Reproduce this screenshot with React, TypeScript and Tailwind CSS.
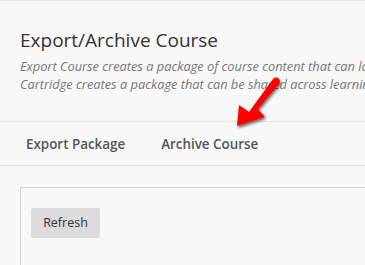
import React from "react";

export default function App() {
  return (
    <div className="relative h-[265px] w-[365px] overflow-hidden bg-[#f8f8f8] font-['Open_Sans',sans-serif]">
      {/* Header */}
      <div className="border-t border-[#e6e6e6] px-5 pt-[27px] pb-[28px]">
        <h1 className="whitespace-nowrap text-[19px] leading-[24px] text-[#333]">Export/Archive Course</h1>
        <p className="mt-[5px] whitespace-nowrap text-[12.8px] italic leading-[18px] text-[#777]">
          Export Course creates a package of course content that can later be imported.
          <br />
          Cartridge creates a package that can be shared across learning systems.
        </p>
      </div>

      {/* Tabs */}
      <div className="flex h-[45px] items-center gap-[36px] border-y border-[#e6e6e6] pl-[26px] pt-[2px]">
        <span className="text-[13.4px] font-semibold text-[#555]">Export Package</span>
        <span className="text-[13.4px] font-semibold text-[#555]">Archive Course</span>
      </div>

      {/* Content box */}
      <div className="ml-5 mt-[21px] h-[100px] border-t border-l border-[#cfcfcf] px-[10px] pt-5">
        <button className="h-[30px] w-[69px] rounded-[2px] bg-[#dcdcdc] text-[12.5px] text-[#333]">Refresh</button>
      </div>

      {/* Annotation arrow */}
      <svg className="absolute left-[228px] top-[72px]" width="60" height="62" viewBox="0 0 60 62">
        <defs>
          <filter id="sh" x="-30%" y="-30%" width="160%" height="160%">
            <feDropShadow dx="1" dy="2" stdDeviation="1.5" floodColor="#000" floodOpacity="0.6" />
          </filter>
        </defs>
        <path
          d="M45 7 C49 3 54 8 51 12 L30 37 L37 45 L9 54 L11 33 L21 40 Z"
          fill="#f00"
          filter="url(#sh)"
        />
      </svg>
    </div>
  );
}
